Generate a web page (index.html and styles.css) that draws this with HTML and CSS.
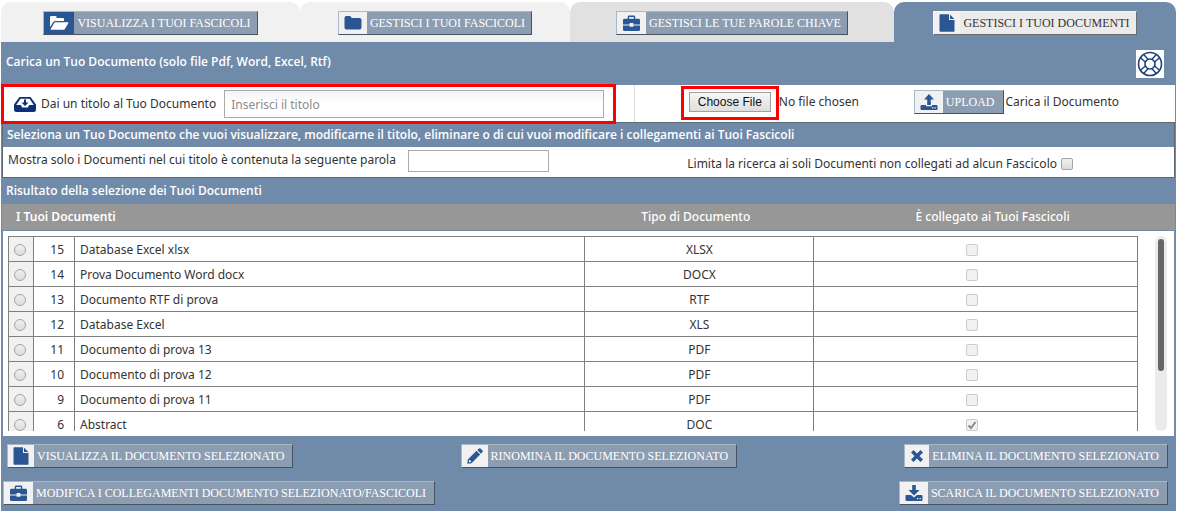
FILE: index.html
```
<!DOCTYPE html>
<html lang="it">
<head>
	<meta charset="utf-8">
	<title>Gestisci i Tuoi Documenti</title>
	<link rel="stylesheet" href="styles.css">
</head>
<body>

<!-- icons shared by the buttons -->
<svg class="defs" aria-hidden="true">
	<symbol id="i-open" viewBox="0 0 20 16"><path d="M1 12V2q0-1 1-1h4.500q1 0 1 1v1H14q1 0 1 1v2H6.500Q5 6 4.300 7z"/><path d="M1.500 14.500 5.200 8q.4-.8 1.400-.8H19q.8 0 .4.800l-3.500 6q-.4.800-1.300.8H2z"/></symbol>
	<symbol id="i-folder" viewBox="0 0 18 16"><path d="M.5 3q0-2 2-2h3q2 0 2 2h8q2 0 2 2v7.500q0 2-2 2h-13q-2 0-2-2z"/></symbol>
	<symbol id="i-case" viewBox="0 0 20 18"><path fill-rule="evenodd" d="M6 4V2q0-1.500 1.500-1.500h5Q14 .5 14 2v2h3.500Q19 4 19 5.500V10h-7V8.500H8V10H1V5.500Q1 4 2.500 4zm1.500 0h5V2h-5zM1 11h7v1.500h4V11h7v4.500q0 1.500-1.500 1.500h-15Q1 17 1 15.500z"/></symbol>
	<symbol id="i-doc" viewBox="0 0 16 18"><path d="M.5 1q0-.8.8-.8H10V6h5.500v11q0 .8-.8.800H1.300q-.8 0-.8-.8zM11 .4 15.300 5H11z"/></symbol>
	<symbol id="i-up" viewBox="0 0 18 16"><path d="M9 0l5 5.500h-3.200V11H7.200V5.500H4z"/><path fill-rule="evenodd" d="M1.500 11H6v1.300h6V11h4.500q1 0 1 1v3q0 1-1 1h-15q-1 0-1-1v-3q0-1 1-1zM12 13.300v1.200h1.300v-1.200zm2.500 0v1.200h1.300v-1.200z"/></symbol>
	<symbol id="i-down" viewBox="0 0 18 16"><path d="M9 10.500 3.500 5h3.700V0h3.600v5h3.700z"/><path fill-rule="evenodd" d="M1.500 10H6l3 2.500 3-2.500h4.500q1 0 1 1v4q0 1-1 1h-15q-1 0-1-1v-4q0-1 1-1zM12 13v1.300h1.300V13zm2.500 0v1.300h1.300V13z"/></symbol>
	<symbol id="i-pencil" viewBox="0 0 16 16"><path fill-rule="evenodd" d="M9.500 2.800l3.700 3.700L4.500 15.200.3 15.700.8 11.500zM2 12.300l-.2 2 2-.2.500-.5-1.800-1.800z"/><path d="M10.300 2 12 .5q.8-.6 1.500 0l2 2q.7.800 0 1.500L14 5.700z"/></symbol>
	<symbol id="i-x" viewBox="0 0 14 14"><path d="M3.500 1 7 4.500 10.500 1 13 3.500 9.500 7l3.500 3.500-2.500 2.500L7 9.500 3.500 13 1 10.500 4.500 7 1 3.500z"/></symbol>
</svg>

<div class="page">

<nav class="tabs">
	<div class="tab tab1"><button class="btn active-ico"><span class="ico"><svg width="20" height="16"><use href="#i-open"/></svg></span><span class="lbl">VISUALIZZA I TUOI FASCICOLI</span></button></div>
	<div class="tab tab2"><button class="btn"><span class="ico"><svg width="18" height="16"><use href="#i-folder"/></svg></span><span class="lbl">GESTISCI I TUOI FASCICOLI</span></button></div>
	<div class="tab tab3"><button class="btn"><span class="ico"><svg width="19" height="17"><use href="#i-case"/></svg></span><span class="lbl">GESTISCI LE TUE PAROLE CHIAVE</span></button></div>
	<div class="tab tab4"><button class="btn current"><span class="ico"><svg width="16" height="18"><use href="#i-doc"/></svg></span><span class="lbl">GESTISCI I TUOI DOCUMENTI</span></button></div>
</nav>

<main class="panel">

	<div class="head">
		<h2>Carica un Tuo Documento (solo file Pdf, Word, Excel, Rtf)</h2>
		<a href="#" class="help" title="Aiuto"><svg width="28" height="28" viewBox="0 0 28 28" fill="none" stroke="#1d3f80"><circle cx="14" cy="14" r="11.500" stroke-width="1.600"/><circle cx="14" cy="14" r="5" stroke-width="1.600"/><path stroke-width="1.400" d="M9.300 12 4.500 7.700M12 9.300 7.700 4.500M16 9.300l4.300-4.800M18.700 12l4.800-4.300M18.700 16l4.800 4.300M16 18.700l4.300 4.800M12 18.700l-4.300 4.800M9.300 16l-4.800 4.300"/></svg></a>
	</div>

	<form class="upload">
		<div class="title-box">
			<svg width="24" height="18" viewBox="0 0 24 18"><path fill="#0f2f78" fill-rule="evenodd" d="M6.500 2h11L23 9.500v5q0 2.500-2.500 2.500h-17Q1 17 1 14.500v-5zM7.500 3.700 3.200 10h4.600l1.400 2.500h5.600l1.400-2.500h4.600L16.500 3.700z"/><path fill="#0f2f78" d="M11 4.500h2v3h2.500L12 11 8.500 7.500H11z"/></svg>
			<label for="titolo">Dai un titolo al Tuo Documento</label>
			<input type="text" id="titolo" placeholder="Inserisci il titolo">
		</div>
		<div class="file-box">
			<div class="file"><input type="file" aria-label="File"><span class="mark"></span></div>
			<div class="send"><button type="button" class="btn"><span class="ico"><svg width="18" height="16"><use href="#i-up"/></svg></span><span class="lbl">UPLOAD</span></button> <span>Carica il Documento</span></div>
		</div>
	</form>

	<section class="filter">
		<h2>Seleziona un Tuo Documento che vuoi visualizzare, modificarne il titolo, eliminare o di cui vuoi modificare i collegamenti ai Tuoi Fascicoli</h2>
		<div class="filter-row">
			<div class="word"><label for="parola">Mostra solo i Documenti nel cui titolo è contenuta la seguente parola</label><input type="text" id="parola"></div>
			<div class="only"><label for="liberi">Limita la ricerca ai soli Documenti non collegati ad alcun Fascicolo</label><input type="checkbox" id="liberi"></div>
		</div>
	</section>

	<h2 class="result">Risultato della selezione dei Tuoi Documenti</h2>

	<table class="thead">
		<tr><th class="h1">I Tuoi Documenti</th><th class="h2">Tipo di Documento</th><th>È collegato ai Tuoi Fascicoli</th></tr>
	</table>

	<div class="list">
		<div class="scroll">
			<table class="docs">
				<colgroup><col class="c-sel"><col class="c-num"><col class="c-tit"><col class="c-typ"><col></colgroup>
				<tr><td><input type="radio" name="doc" aria-label="15"></td><td>15</td><td>Database Excel xlsx</td><td>XLSX</td><td><input type="checkbox" disabled aria-label="Collegato"></td></tr>
				<tr><td><input type="radio" name="doc" aria-label="14"></td><td>14</td><td>Prova Documento Word docx</td><td>DOCX</td><td><input type="checkbox" disabled aria-label="Collegato"></td></tr>
				<tr><td><input type="radio" name="doc" aria-label="13"></td><td>13</td><td>Documento RTF di prova</td><td>RTF</td><td><input type="checkbox" disabled aria-label="Collegato"></td></tr>
				<tr><td><input type="radio" name="doc" aria-label="12"></td><td>12</td><td>Database Excel</td><td>XLS</td><td><input type="checkbox" disabled aria-label="Collegato"></td></tr>
				<tr><td><input type="radio" name="doc" aria-label="11"></td><td>11</td><td>Documento di prova 13</td><td>PDF</td><td><input type="checkbox" disabled aria-label="Collegato"></td></tr>
				<tr><td><input type="radio" name="doc" aria-label="10"></td><td>10</td><td>Documento di prova 12</td><td>PDF</td><td><input type="checkbox" disabled aria-label="Collegato"></td></tr>
				<tr><td><input type="radio" name="doc" aria-label="9"></td><td>9</td><td>Documento di prova 11</td><td>PDF</td><td><input type="checkbox" disabled aria-label="Collegato"></td></tr>
				<tr><td><input type="radio" name="doc" aria-label="6"></td><td>6</td><td>Abstract</td><td>DOC</td><td><input type="checkbox" disabled checked aria-label="Collegato"></td></tr>
			</table>
		</div>
		<div class="track"><div class="thumb"></div></div>
	</div>

	<div class="actions">
		<button class="btn"><span class="ico"><svg width="16" height="18"><use href="#i-doc"/></svg></span><span class="lbl">VISUALIZZA IL DOCUMENTO SELEZIONATO</span></button>
		<button class="btn"><span class="ico"><svg width="16" height="16"><use href="#i-pencil"/></svg></span><span class="lbl">RINOMINA IL DOCUMENTO SELEZIONATO</span></button>
		<button class="btn"><span class="ico"><svg width="14" height="14"><use href="#i-x"/></svg></span><span class="lbl">ELIMINA IL DOCUMENTO SELEZIONATO</span></button>
	</div>
	<div class="actions last">
		<button class="btn"><span class="ico"><svg width="19" height="17"><use href="#i-case"/></svg></span><span class="lbl">MODIFICA I COLLEGAMENTI DOCUMENTO SELEZIONATO/FASCICOLI</span></button>
		<button class="btn"><span class="ico"><svg width="18" height="16"><use href="#i-down"/></svg></span><span class="lbl">SCARICA IL DOCUMENTO SELEZIONATO</span></button>
	</div>

</main>
</div>

</body>
</html>
```
FILE: styles.css
```
* {
	box-sizing: border-box;
}
body {
	margin: 0;
	background: #fff;
	color: #333;
	font-family: "Noto Sans", "Open Sans", sans-serif;
	font-size: 12px;
	line-height: 16px;
}
.defs {
	display: none;
}
.page {
	padding: 2px 1px 0 1px;
}
h2 {
	margin: 0;
	color: #fff;
	font-family: "Open Sans", sans-serif;
	font-size: 12px;
	font-weight: 600;
	line-height: 16px;
}

/* tabs */
.tabs {
	display: flex;
}
.tab {
	display: flex;
	justify-content: center;
	height: 40px;
	padding-top: 9px;
	background: #f1f1f1;
	border-radius: 10px 10px 0 0;
}
.tab1 { flex: 299 0 0; }
.tab2 { flex: 270 0 0; }
.tab3 { flex: 324 0 0; background: #e1e1e1; }
.tab4 { flex: 282 0 0; background: #708baa; }

/* buttons with an icon on the left */
.btn {
	display: flex;
	height: 24px;
	padding: 0;
	background: #8c9db2;
	border: 1px solid #a9b8c6;
	border-right-color: #47535f;
	border-bottom-color: #47535f;
	color: #fff;
	font-family: "Liberation Serif", serif;
	font-size: 12px;
	line-height: 22px;
	white-space: nowrap;
}
.ico {
	display: flex;
	align-items: center;
	padding: 0 5px;
	background: #f1f1f1;
	fill: #2a5794;
}
.lbl {
	padding: 0 8px 0 3px;
}
.tab .lbl {
	padding-right: 6px;
}
.active-ico .ico {
	background: #2a5794;
	fill: #fff;
}
.current {
	background: #ebebeb;
	border-color: #f5f5f5 #6b6b6b #6b6b6b #f5f5f5;
	color: #333;
}

/* panel */
.panel {
	background: #708baa;
	padding: 0 1px;
}
.head {
	display: flex;
	justify-content: space-between;
	height: 43px;
	padding: 8px 11px 0 4px;
}
.head h2 {
	padding-top: 4px;
}
.help {
	width: 28px;
	height: 28px;
	background: #fff;
}
.upload {
	display: flex;
	height: 37px;
	background: #fff;
}
.title-box {
	display: flex;
	align-items: center;
	gap: 4px;
	flex: 0 0 51.9%;
	margin: 2px 0 1px 2px;
	padding: 0 9px;
	outline: 3px solid #f00;
	position: relative;
	z-index: 1;
}
.title-box label {
	padding-right: 4px;
}
.title-box input {
	flex: 1;
	height: 28px;
	padding: 0 6px;
	background: linear-gradient(#f4f4f4, #fff 50%);
	border: 1px solid #aaa;
	font: inherit;
}
::placeholder {
	color: #8c8c8c;
}
.file-box {
	display: flex;
	align-items: center;
	flex: 1;
	margin-left: 21px;
	padding: 0 56px 3px 54px;
	justify-content: space-between;
	border-left: 1px solid #ddd;
}
.file {
	position: relative;
}
.file input {
	width: 190px;
	font: inherit;
	color: #333;
}
.file input::file-selector-button {
	height: 20px;
	margin: 0 8px 0 0;
	padding: 0 8px;
	background: linear-gradient(#f6f6f6, #dedede);
	border: 1px solid #a0a0a0;
	color: #111;
	font-family: "Liberation Sans", sans-serif;
	font-size: 12px;
}
.mark {
	position: absolute;
	left: -8px;
	top: -6px;
	width: 98px;
	height: 34px;
	border: 3px solid #f00;
	pointer-events: none;
}
.send {
	display: flex;
	align-items: center;
	gap: 2px;
}

/* filter */
.filter {
	border: 1px solid #5e6a73;
}
.filter h2 {
	padding: 4px 4px;
}
.filter-row {
	display: flex;
	justify-content: space-between;
	height: 30px;
	padding: 3px 101px 0 5px;
	background: #fff;
}
.word,
.only {
	display: flex;
	gap: 4px;
}
.word {
	gap: 12px;
}
.word label {
	padding-top: 2px;
}
.word input {
	width: 141px;
	height: 22px;
	border: 1px solid #aaa;
}
.only {
	align-items: center;
}
input[type=checkbox],
input[type=radio] {
	appearance: none;
	width: 12px;
	height: 12px;
	margin: 0;
	background: linear-gradient(#f0f0f0, #dcdcdc);
	border: 1px solid #a5a5a5;
	border-radius: 2px;
}
input[type=radio] {
	border-radius: 50%;
}
input[type=checkbox]:disabled {
	background: #f1f1f1;
	border-color: #ccc;
}
input[type=checkbox]:checked {
	background: #f1f1f1 url("data:image/svg+xml,%3Csvg xmlns='http://www.w3.org/2000/svg' viewBox='0 0 10 10'%3E%3Cpath d='M1.500 5.500 4 8 8.500 2' fill='none' stroke='%23888' stroke-width='2'/%3E%3C/svg%3E");
}

/* results */
.result {
	padding: 5px 4px;
}
.thead {
	width: 100%;
	table-layout: fixed;
	border-collapse: collapse;
	background: #979797;
	color: #fff;
}
.thead th {
	height: 26px;
	padding: 0;
	font-weight: 500;
}
.thead .h1 {
	width: 49.4%;
	padding-left: 14px;
	text-align: left;
	font-weight: 600;
}
.thead .h2 {
	width: 19.5%;
}
.list {
	display: flex;
	justify-content: space-between;
	margin: 1px 1px 0 1px;
	padding: 5px 7px 5px 5px;
	background: #fff;
}
.scroll {
	flex: 1;
	height: 195px;
	overflow: hidden;
}
.docs {
	width: 100%;
	table-layout: fixed;
	border-collapse: collapse;
	border: 1px solid #333;
}
.docs td {
	height: 25px;
	padding: 1px 5px 0 5px;
	border: 1px solid #808080;
	line-height: 14px;
	text-align: center;
}
.docs td:first-child {
	padding: 0 2px 0 0;
	background: #f1f1f1;
}
.docs td:nth-child(2) {
	padding-right: 10px;
	text-align: right;
}
.docs td:nth-child(3) {
	text-align: left;
}
.docs td:last-child {
	padding: 0 12px 0 5px;
}
.docs input {
	display: block;
	margin: 2px auto 0 auto;
}
.c-sel { width: 25px; }
.c-num { width: 41px; }
.c-tit { width: 45.2%; }
.c-typ { width: 20.3%; }
.track {
	width: 12px;
	margin-left: 17px;
	padding: 3px;
	background: #ebebeb;
	border-radius: 6px;
}
.thumb {
	height: 132px;
	background: #666;
	border-radius: 3px;
}

/* bottom buttons */
.actions {
	display: flex;
	justify-content: space-between;
	padding: 8px 7px 0 5px;
}
.last {
	padding: 13px 7px 6px 1px;
}
```
